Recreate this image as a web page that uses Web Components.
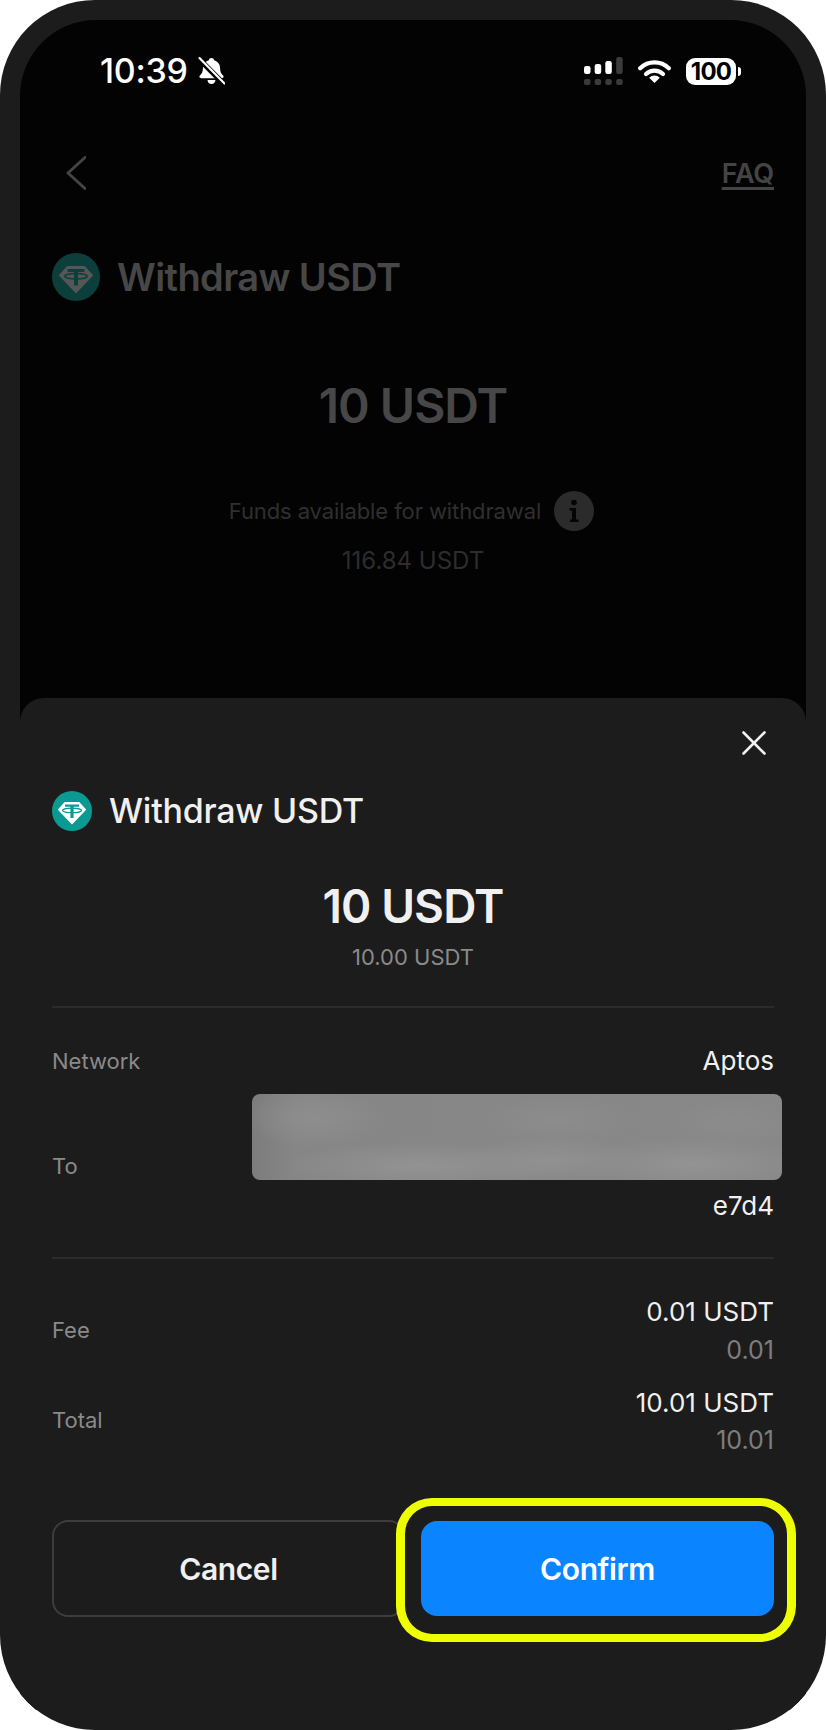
<!DOCTYPE html>
<html lang="en">
<head>
<meta charset="utf-8">
<title>Withdraw USDT</title>
<style>
    html, body { margin: 0; background: #fff; }
    body { font-family: Inter, "Liberation Sans", sans-serif; }
</style>
</head>
<body>
<phone-frame>
    <status-bar slot="status" time="10:39" battery="100"></status-bar>
    <withdraw-page slot="page"></withdraw-page>
    <confirm-sheet slot="sheet">
        <sheet-title>Withdraw USDT</sheet-title>
        <amount-block amount="10 USDT" sub="10.00 USDT"></amount-block>
        <sheet-divider></sheet-divider>
        <detail-row label="Network" value="Aptos"></detail-row>
        <address-row label="To" tail="e7d4"></address-row>
        <sheet-divider class="second"></sheet-divider>
        <detail-row class="fee" label="Fee" value="0.01 USDT" sub="0.01"></detail-row>
        <detail-row class="total" label="Total" value="10.01 USDT" sub="10.01"></detail-row>
        <action-bar></action-bar>
    </confirm-sheet>
</phone-frame>

<script>
// tether logo, colours come from the --disc / --gem custom properties
customElements.define('tether-icon',
    class extends HTMLElement {
        constructor() {
            super();
            this.shadow = this.attachShadow({ mode: 'open' });
            this.shadow.innerHTML = `
            <style>
                :host { display: block; width: var(--size, 40px); height: var(--size, 40px); flex: none; }
                svg { display: block; width: 100%; height: 100%; }
            </style>
            <svg viewBox="0 0 40 40">
                <circle cx="20" cy="20" r="20" fill="var(--disc, #0b9a91)"/>
                <path d="M13 11.600H27L33.400 18.600 20 32.600 6.600 18.600Z" fill="var(--gem, #fff)" stroke="var(--gem, #fff)" stroke-width="1.400" stroke-linejoin="round"/>
                <path d="M13 13.400H27V15.800H21.600V27H18.400V15.800H13Z" fill="var(--disc, #0b9a91)"/>
                <ellipse cx="20" cy="19.400" rx="9.400" ry="2.300" fill="none" stroke="var(--disc, #0b9a91)" stroke-width="1.300"/>
            </svg>
            `;
        }
    }
);

customElements.define('status-bar',
    class extends HTMLElement {
        constructor() {
            super();
            this.shadow = this.attachShadow({ mode: 'open' });
            const time = this.getAttribute('time');
            const battery = this.getAttribute('battery');
            this.shadow.innerHTML = `
            <style>
                :host { display: flex; align-items: center; height: 28px; padding: 37px 65px 0 80px; color: #fff; }
                .time { font-size: 34px; font-weight: 500; line-height: 28px; letter-spacing: -0.3px; }
                .bell { width: 27px; height: 28px; margin-left: 10px; }
                .space { flex: 1; }
                .signal { width: 39px; height: 28px; }
                .wifi { width: 33px; height: 24px; margin-left: 15px; }
                .battery { display: flex; align-items: center; margin-left: 15px; }
                .pill { width: 50px; height: 27px; border-radius: 9px; background: #fff; color: #000; font-size: 24px; font-weight: 700; letter-spacing: -0.8px; line-height: 27px; text-align: center; }
                .nub { width: 3px; height: 9px; margin-left: 2px; border-radius: 0 3px 3px 0; background: #fff; }
                svg { display: block; }
            </style>
            <span class="time">${time}</span>
            <svg class="bell" viewBox="0 0 27 28">
                <path d="M13.500 1c1.400 0 2.400.9 2.600 2.300 3.700 1.100 6 4 6 8 0 3.400.9 5.400 3 7.300 1 1 .4 2.600-1.100 2.600H3c-1.500 0-2.100-1.600-1.100-2.600 2.100-1.900 3-3.900 3-7.300 0-4 2.300-6.900 6-8C11.100 1.900 12.100 1 13.500 1Z" fill="#fff"/>
                <path d="M9.500 23h8c-.2 2.400-1.900 4-4 4s-3.800-1.600-4-4Z" fill="#fff"/>
                <path d="M0.500 1.500 26 27" stroke="#030303" stroke-width="5.400"/>
                <path d="M1.500 1 26.500 26.500" stroke="#fff" stroke-width="2.200" stroke-linecap="round"/>
            </svg>
            <span class="space"></span>
            <svg class="signal" viewBox="0 0 39 28">
                <rect x="0" y="9" width="6.500" height="8" rx="2.200" fill="#fff"/>
                <rect x="10.700" y="7" width="6.500" height="10" rx="2.200" fill="#fff"/>
                <rect x="21.300" y="4" width="6.500" height="13" rx="2.200" fill="#fff"/>
                <rect x="32.200" y="0" width="6.500" height="17" rx="2.200" fill="#3b3b3b"/>
                <rect x="0" y="22" width="6.500" height="6" rx="2" fill="#3b3b3b"/>
                <rect x="10.700" y="22" width="6.500" height="6" rx="2" fill="#3b3b3b"/>
                <rect x="21.300" y="22" width="6.500" height="6" rx="2" fill="#3b3b3b"/>
                <rect x="32.200" y="22" width="6.500" height="6" rx="2" fill="#3b3b3b"/>
            </svg>
            <svg class="wifi" viewBox="0 0 33 24">
                <path d="M2.200 9.200A20.500 20.500 0 0 1 30.800 9.200" fill="none" stroke="#fff" stroke-width="4.200" stroke-linecap="round"/>
                <path d="M8 15A12.400 12.400 0 0 1 25 15" fill="none" stroke="#fff" stroke-width="4.200" stroke-linecap="round"/>
                <path d="M16.500 24 11.200 18.800A7.500 7.500 0 0 1 21.800 18.800Z" fill="#fff"/>
            </svg>
            <span class="battery"><span class="pill">${battery}</span><span class="nub"></span></span>
            `;
        }
    }
);

// the dimmed page behind the sheet
customElements.define('withdraw-page',
    class extends HTMLElement {
        constructor() {
            super();
            this.shadow = this.attachShadow({ mode: 'open' });
            this.shadow.innerHTML = `
            <style>
                :host { display: block; padding: 0 32px; color: #474747; --disc: #0c3f3c; --gem: #565656; --size: 48px; }
                .nav { display: flex; justify-content: space-between; align-items: center; height: 34px; margin-top: 71px; padding-left: 14px; }
                .nav svg { display: block; width: 20px; height: 34px; }
                .faq { font-size: 27px; font-weight: 600; letter-spacing: -0.2px; text-decoration: underline; text-decoration-thickness: 3px; text-underline-offset: 4px; color: #444; }
                .title { display: flex; align-items: center; gap: 17px; margin-top: 63px; font-size: 38px; font-weight: 600; line-height: 48px; letter-spacing: -0.6px; }
                .amount { margin-top: 81px; text-align: center; font-size: 48px; font-weight: 600; line-height: 48px; letter-spacing: -1px; }
                .funds { display: flex; justify-content: center; align-items: center; gap: 13px; margin-top: 61px; height: 40px; padding-right: 3px; font-size: 22px; letter-spacing: -0.1px; color: #2f2f2f; }
                .info { width: 40px; height: 40px; }
                .balance { margin-top: 15px; text-align: center; font-size: 24px; line-height: 30px; color: #2d2d2d; }
            </style>
            <div class="nav">
                <svg viewBox="0 0 20 34"><path d="M19 1.500 2 17 19 32.500" fill="none" stroke="#444" stroke-width="3" stroke-linecap="round" stroke-linejoin="round"/></svg>
                <span class="faq">FAQ</span>
            </div>
            <div class="title"><tether-icon></tether-icon><span>Withdraw USDT</span></div>
            <div class="amount">10 USDT</div>
            <div class="funds">
                <span>Funds available for withdrawal</span>
                <svg class="info" viewBox="0 0 40 40">
                    <circle cx="20" cy="20" r="20" fill="#2b2b2b"/>
                    <circle cx="20" cy="11.500" r="2.800" fill="#050505"/>
                    <path d="M15.500 17H22V28.500H24.500V31H16V28.500H18V19.500H15.500Z" fill="#050505"/>
                </svg>
            </div>
            <div class="balance">116.84 USDT</div>
            `;
        }
    }
);

customElements.define('sheet-title',
    class extends HTMLElement {
        constructor() {
            super();
            this.shadow = this.attachShadow({ mode: 'open' });
            this.shadow.innerHTML = `
            <style>
                :host { display: flex; align-items: center; gap: 17px; margin-top: 36px; color: #f0f0f0; font-size: 34px; font-weight: 500; line-height: 40px; letter-spacing: -0.25px; }
            </style>
            <tether-icon></tether-icon><slot></slot>
            `;
        }
    }
);

customElements.define('amount-block',
    class extends HTMLElement {
        constructor() {
            super();
            this.shadow = this.attachShadow({ mode: 'open' });
            this.shadow.innerHTML = `
            <style>
                :host { display: block; margin-top: 52px; text-align: center; }
                .big { color: #f0f0f0; font-size: 46px; font-weight: 600; line-height: 46px; letter-spacing: -0.9px; }
                .small { margin-top: 13px; color: #8a8a8a; font-size: 22px; line-height: 30px; }
            </style>
            <div class="big">${this.getAttribute('amount')}</div>
            <div class="small">${this.getAttribute('sub')}</div>
            `;
        }
    }
);

customElements.define('sheet-divider',
    class extends HTMLElement {
        constructor() {
            super();
            this.shadow = this.attachShadow({ mode: 'open' });
            this.shadow.innerHTML = `
            <style>
                :host { display: block; height: 2px; margin-top: 34px; background: #2b2b2b; }
                :host(.second) { margin-top: 36px; }
            </style>
            `;
        }
    }
);

customElements.define('detail-row',
    class extends HTMLElement {
        constructor() {
            super();
            this.shadow = this.attachShadow({ mode: 'open' });
            const sub = this.getAttribute('sub');
            this.shadow.innerHTML = `
            <style>
                :host { display: flex; justify-content: space-between; align-items: center; margin-top: 38px; font-size: 22px; line-height: 30px; }
                :host(.fee) { margin-top: 38px; }
                :host(.total) { margin-top: 23px; }
                :host(.fee) .label, :host(.total) .label { padding-bottom: 3px; }
                .label { color: #8a8a8a; }
                .right { text-align: right; }
                .value { color: #f0f0f0; font-size: 26px; }
                .sub { margin-top: 8px; color: #7d7d7d; font-size: 25px; }
                :host(.total) .sub { margin-top: 7px; }
            </style>
            <span class="label">${this.getAttribute('label')}</span>
            <div class="right">
                <div class="value">${this.getAttribute('value')}</div>
                ${sub ? `<div class="sub">${sub}</div>` : ''}
            </div>
            `;
        }
    }
);

// address is redacted in the source picture, so the box is just a blur
customElements.define('address-row',
    class extends HTMLElement {
        constructor() {
            super();
            this.shadow = this.attachShadow({ mode: 'open' });
            this.shadow.innerHTML = `
            <style>
                :host { display: flex; justify-content: space-between; align-items: center; margin-top: 18px; font-size: 22px; line-height: 30px; }
                .label { padding-top: 16px; color: #8a8a8a; }
                .right { text-align: right; color: #f0f0f0; font-size: 26px; }
                .blur { width: 530px; height: 86px; margin: 0 -8px 11px 0; border-radius: 8px; background:
                    radial-gradient(ellipse 70px 30px at 62px 24px, #8e8e8e, transparent),
                    radial-gradient(ellipse 140px 24px at 170px 72px, #939393, transparent),
                    radial-gradient(ellipse 90px 24px at 300px 66px, #919191, transparent),
                    radial-gradient(ellipse 120px 26px at 440px 70px, #939393, transparent),
                    radial-gradient(ellipse 80px 24px at 305px 26px, #8c8c8c, transparent),
                    radial-gradient(ellipse 60px 24px at 480px 28px, #8c8c8c, transparent),
                    linear-gradient(90deg, #7c7c7c, #868686 8%, #888 100%); }
            </style>
            <span class="label">${this.getAttribute('label')}</span>
            <div class="right">
                <div class="blur"></div>
                <div>${this.getAttribute('tail')}</div>
            </div>
            `;
        }
    }
);

customElements.define('action-bar',
    class extends HTMLElement {
        constructor() {
            super();
            this.shadow = this.attachShadow({ mode: 'open' });
            this.shadow.innerHTML = `
            <style>
                :host { display: grid; grid-template-columns: 1fr 1fr; gap: 16px; margin-top: 65px; font-size: 30px; font-weight: 600; letter-spacing: -0.4px; }
                .btn { display: flex; justify-content: center; align-items: center; box-sizing: border-box; border-radius: 16px; }
                .cancel { height: 97px; border: 2px solid #3d3d3d; color: #f0f0f0; }
                .confirm { position: relative; margin: 1px 0; background: #0a84ff; color: #fff; }
                /* tutorial highlight drawn over the button */
                .mark { position: absolute; top: -23px; bottom: -26px; left: -25px; right: -22px; border-style: solid; border-width: 8px 9px; border-color: #eeff00; border-radius: 36px; }
            </style>
            <div class="btn cancel">Cancel</div>
            <div class="btn confirm">Confirm<span class="mark"></span></div>
            `;
        }
    }
);

customElements.define('confirm-sheet',
    class extends HTMLElement {
        constructor() {
            super();
            this.shadow = this.attachShadow({ mode: 'open' });
            this.shadow.innerHTML = `
            <style>
                :host { display: block; box-sizing: border-box; height: 1012px; padding: 33px 32px 0; border-radius: 24px 24px 0 0; background: #1c1c1c; }
                .close { display: flex; justify-content: flex-end; padding-right: 8px; }
                svg { display: block; width: 24px; height: 24px; }
            </style>
            <div class="close">
                <svg viewBox="0 0 24 24"><path d="M1.500 1.500 22.500 22.500M22.500 1.500 1.500 22.500" stroke="#f0f0f0" stroke-width="2.600" stroke-linecap="round"/></svg>
            </div>
            <slot></slot>
            `;
        }
    }
);

customElements.define('phone-frame',
    class extends HTMLElement {
        constructor() {
            super();
            this.shadow = this.attachShadow({ mode: 'open' });
            this.shadow.innerHTML = `
            <style>
                :host { display: block; box-sizing: border-box; width: 826px; height: 1730px; padding: 20px; border-radius: 95px; background: #1c1c1c; overflow: hidden; }
                .screen { display: flex; flex-direction: column; height: 100%; border-radius: 76px 76px 0 0; background: #030303; overflow: hidden; }
                .top { flex: 1; }
            </style>
            <div class="screen">
                <div class="top">
                    <slot name="status"></slot>
                    <slot name="page"></slot>
                </div>
                <slot name="sheet"></slot>
            </div>
            `;
        }
    }
);
</script>
</body>
</html>
